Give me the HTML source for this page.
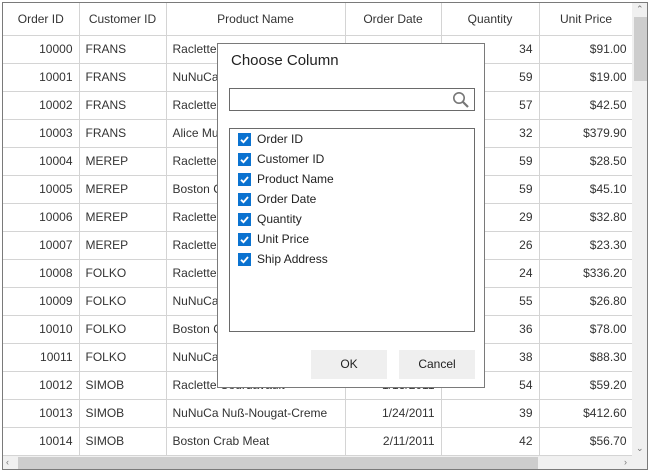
<!DOCTYPE html>
<html><head><meta charset="utf-8"><style>
*{margin:0;padding:0;box-sizing:border-box}
body{width:650px;height:474px;background:#fff;font-family:"Liberation Sans",sans-serif;font-size:12px;color:#333;position:relative;overflow:hidden}
#grid{position:absolute;left:2px;top:2px;width:646px;height:468px;border:1px solid #7a7a7a;overflow:hidden}
table{border-collapse:collapse;table-layout:fixed;position:absolute;left:0;top:0}
td,th{border-right:1px solid #d4d4d4;border-bottom:1px solid #d4d4d4;height:28px;padding:0 6px;white-space:nowrap;overflow:hidden;font-weight:normal}
th{height:32px;text-align:center;color:#333}
.r{text-align:right}
#vs{position:absolute;left:629px;top:0;width:16px;height:453px;background:#f0f0f0}
#vth{position:absolute;left:631px;top:14px;width:13px;height:64px;background:#cdcdcd}
#hs{position:absolute;left:0;top:453px;width:644px;height:13px;background:#f0f0f0}
#hth{position:absolute;left:15px;top:454px;width:520px;height:12px;background:#cdcdcd}
.ar{position:absolute;font-size:9px;color:#777}
#dlg{position:absolute;left:217px;top:43px;width:268px;height:345px;background:#fff;border:1px solid #7a7a7a}
#title{position:absolute;left:13px;top:8px;font-size:15px;color:#222}
#search{position:absolute;left:11px;top:44px;width:246px;height:23px;border:1px solid #6a6a6a}
#list{position:absolute;left:11px;top:84px;width:246px;height:204px;border:1px solid #6a6a6a}
.it{position:absolute;left:8px;width:220px;height:16px;font-size:12px;color:#222;line-height:14px;white-space:nowrap}
.cb{position:absolute;left:0;top:1px;width:13px;height:13px;background:#0a72d0}
.it span{position:absolute;left:19px;top:0}
.btn{position:absolute;top:306px;width:76px;height:29px;background:#efefef;text-align:center;line-height:29px;color:#222}
</style></head><body>
<div id="grid">
<table>
<colgroup><col style="width:76px"><col style="width:87px"><col style="width:179px"><col style="width:96px"><col style="width:98px"><col style="width:94px"></colgroup>
<tr><th>Order ID</th><th>Customer ID</th><th>Product Name</th><th>Order Date</th><th>Quantity</th><th>Unit Price</th></tr>
<tr><td class="r">10000</td><td>FRANS</td><td>Raclette Courdavault</td><td class="r">1/1/2011</td><td class="r">34</td><td class="r">$91.00</td></tr>
<tr><td class="r">10001</td><td>FRANS</td><td>NuNuCa Nuß-Nougat-Creme</td><td class="r">1/2/2011</td><td class="r">59</td><td class="r">$19.00</td></tr>
<tr><td class="r">10002</td><td>FRANS</td><td>Raclette Courdavault</td><td class="r">1/3/2011</td><td class="r">57</td><td class="r">$42.50</td></tr>
<tr><td class="r">10003</td><td>FRANS</td><td>Alice Mutton</td><td class="r">1/4/2011</td><td class="r">32</td><td class="r">$379.90</td></tr>
<tr><td class="r">10004</td><td>MEREP</td><td>Raclette Courdavault</td><td class="r">1/5/2011</td><td class="r">59</td><td class="r">$28.50</td></tr>
<tr><td class="r">10005</td><td>MEREP</td><td>Boston Crab Meat</td><td class="r">1/6/2011</td><td class="r">59</td><td class="r">$45.10</td></tr>
<tr><td class="r">10006</td><td>MEREP</td><td>Raclette Courdavault</td><td class="r">1/7/2011</td><td class="r">29</td><td class="r">$32.80</td></tr>
<tr><td class="r">10007</td><td>MEREP</td><td>Raclette Courdavault</td><td class="r">1/8/2011</td><td class="r">26</td><td class="r">$23.30</td></tr>
<tr><td class="r">10008</td><td>FOLKO</td><td>Raclette Courdavault</td><td class="r">1/9/2011</td><td class="r">24</td><td class="r">$336.20</td></tr>
<tr><td class="r">10009</td><td>FOLKO</td><td>NuNuCa Nuß-Nougat-Creme</td><td class="r">1/10/2011</td><td class="r">55</td><td class="r">$26.80</td></tr>
<tr><td class="r">10010</td><td>FOLKO</td><td>Boston Crab Meat</td><td class="r">1/11/2011</td><td class="r">36</td><td class="r">$78.00</td></tr>
<tr><td class="r">10011</td><td>FOLKO</td><td>NuNuCa Nuß-Nougat-Creme</td><td class="r">1/12/2011</td><td class="r">38</td><td class="r">$88.30</td></tr>
<tr><td class="r">10012</td><td>SIMOB</td><td>Raclette Courdavault</td><td class="r">1/13/2011</td><td class="r">54</td><td class="r">$59.20</td></tr>
<tr><td class="r">10013</td><td>SIMOB</td><td>NuNuCa Nuß-Nougat-Creme</td><td class="r">1/24/2011</td><td class="r">39</td><td class="r">$412.60</td></tr>
<tr><td class="r">10014</td><td>SIMOB</td><td>Boston Crab Meat</td><td class="r">2/11/2011</td><td class="r">42</td><td class="r">$56.70</td></tr>
<tr><td class="r">10015</td><td>SIMOB</td><td>Alice Mutton</td><td class="r">2/12/2011</td><td class="r">40</td><td class="r">$50.00</td></tr>
</table>
<div id="vs"></div><div id="vth"></div>
<div id="hs"></div><div id="hth"></div>
<div class="ar" style="left:633px;top:1px">&#8963;</div>
<div class="ar" style="left:633px;top:440px">&#8964;</div>
<div class="ar" style="left:3px;top:454px">&lsaquo;</div>
<div class="ar" style="left:621px;top:454px">&rsaquo;</div>
</div>
<div id="dlg">
<div id="title">Choose Column</div>
<div id="search"><svg style="position:absolute;right:4px;top:2px" width="18" height="18" viewBox="0 0 18 18"><circle cx="7" cy="7" r="5.2" fill="none" stroke="#777" stroke-width="1.6"/><path d="M11 11 L16 16" stroke="#777" stroke-width="2.2"/></svg></div>
<div id="list">
<div class="it" style="top:3px"><div class="cb"><svg width="13" height="13"><path d="M3 6.8 L5.5 9.2 L10 4" stroke="#fff" stroke-width="1.8" fill="none"/></svg></div><span>Order ID</span></div>
<div class="it" style="top:23px"><div class="cb"><svg width="13" height="13"><path d="M3 6.8 L5.5 9.2 L10 4" stroke="#fff" stroke-width="1.8" fill="none"/></svg></div><span>Customer ID</span></div>
<div class="it" style="top:43px"><div class="cb"><svg width="13" height="13"><path d="M3 6.8 L5.5 9.2 L10 4" stroke="#fff" stroke-width="1.8" fill="none"/></svg></div><span>Product Name</span></div>
<div class="it" style="top:63px"><div class="cb"><svg width="13" height="13"><path d="M3 6.8 L5.5 9.2 L10 4" stroke="#fff" stroke-width="1.8" fill="none"/></svg></div><span>Order Date</span></div>
<div class="it" style="top:83px"><div class="cb"><svg width="13" height="13"><path d="M3 6.8 L5.5 9.2 L10 4" stroke="#fff" stroke-width="1.8" fill="none"/></svg></div><span>Quantity</span></div>
<div class="it" style="top:103px"><div class="cb"><svg width="13" height="13"><path d="M3 6.8 L5.5 9.2 L10 4" stroke="#fff" stroke-width="1.8" fill="none"/></svg></div><span>Unit Price</span></div>
<div class="it" style="top:123px"><div class="cb"><svg width="13" height="13"><path d="M3 6.8 L5.5 9.2 L10 4" stroke="#fff" stroke-width="1.8" fill="none"/></svg></div><span>Ship Address</span></div>
</div>
<div class="btn" style="left:93px">OK</div>
<div class="btn" style="left:181px">Cancel</div>
</div>
</body></html>
